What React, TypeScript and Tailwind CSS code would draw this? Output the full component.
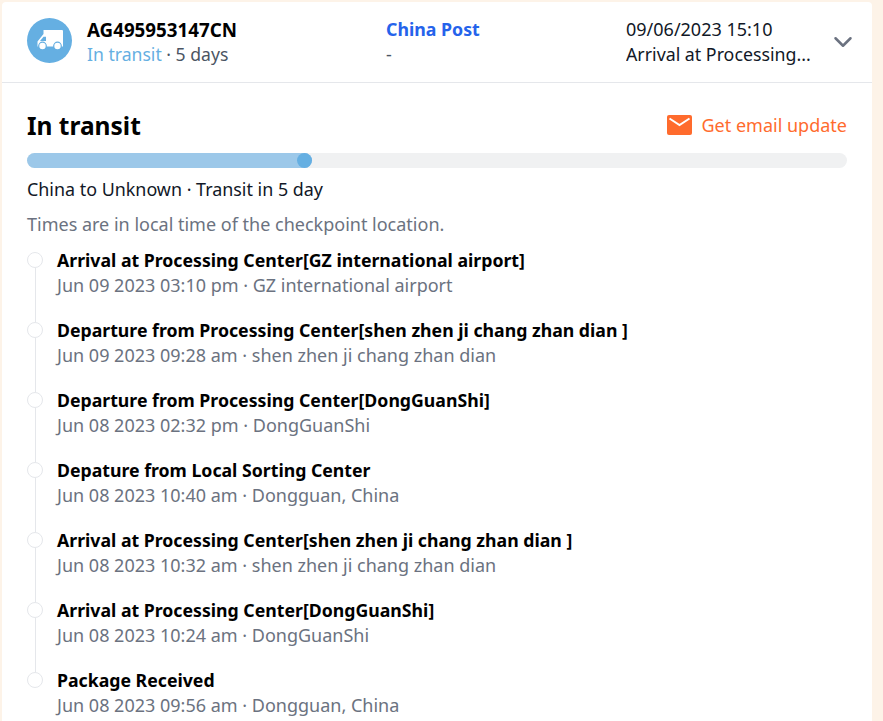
import { ChevronDown } from 'lucide-react';

const events = [
  { title: 'Arrival at Processing Center[GZ international airport]', sub: 'Jun 09 2023 03:10 pm · GZ international airport' },
  { title: 'Departure from Processing Center[shen zhen ji chang zhan dian ]', sub: 'Jun 09 2023 09:28 am · shen zhen ji chang zhan dian' },
  { title: 'Departure from Processing Center[DongGuanShi]', sub: 'Jun 08 2023 02:32 pm · DongGuanShi' },
  { title: 'Depature from Local Sorting Center', sub: 'Jun 08 2023 10:40 am · Dongguan, China' },
  { title: 'Arrival at Processing Center[shen zhen ji chang zhan dian ]', sub: 'Jun 08 2023 10:32 am · shen zhen ji chang zhan dian' },
  { title: 'Arrival at Processing Center[DongGuanShi]', sub: 'Jun 08 2023 10:24 am · DongGuanShi' },
  { title: 'Package Received', sub: 'Jun 08 2023 09:56 am · Dongguan, China' },
];

function TruckIcon() {
  return (
    <svg width="26" height="20" viewBox="0 0 26 20" fill="white">
      <path d="M6.5 0H25a1 1 0 0 1 1 1v15.500H0.500V11.500L6.500 4z" />
      <path d="M3 11 6.500 6.800H9V11z" fill="#65afe2" />
      <circle cx="5.500" cy="16" r="4.400" fill="#65afe2" />
      <circle cx="5.500" cy="16" r="3.200" />
      <circle cx="20.500" cy="16" r="4.400" fill="#65afe2" />
      <circle cx="20.500" cy="16" r="3.200" />
    </svg>
  );
}

function MailIcon() {
  return (
    <svg width="25" height="20" viewBox="0 0 25 20" className="mb-[2px] shrink-0">
      <rect width="25" height="20" rx="2" fill="#ff6b2d" />
      <path d="M2.500 3.500 12.500 10l10-6.500" fill="none" stroke="white" strokeWidth="2" />
    </svg>
  );
}

export default function App() {
  return (
    <div className="h-[721px] overflow-hidden bg-[#fdf3e8] pl-[2px] pr-[11px] pt-[2px] font-['Noto_Sans',sans-serif] text-[18px] leading-[25px]">
      <div className="h-[719px] overflow-hidden rounded-t-[4px] bg-white">
        <div className="flex h-[81px] items-center border-b border-[#e5e7eb] pl-[25px]">
          <div className="mb-[4px] flex h-[45px] w-[45px] shrink-0 items-center justify-center rounded-full bg-[#65afe2]">
            <TruckIcon />
          </div>
          <div className="ml-[15px] w-[299px]">
            <div className="text-[18.75px] font-bold text-black">AG495953147CN</div>
            <div className="text-[17.6px] text-[#4b5563]">
              <span className="text-[#65afe2]">In transit</span> · 5 days
            </div>
          </div>
          <div className="w-[240px]">
            <div className="text-[17.75px] font-bold text-[#2563eb]">China Post</div>
            <div className="text-[#4b5563]">-</div>
          </div>
          <div className="w-[190px] text-[#111827]">
            <div>09/06/2023 15:10</div>
            <div className="truncate text-[17.8px]">Arrival at Processing...</div>
          </div>
          <ChevronDown className="ml-[12px] text-[#6b7280]" size={30} strokeWidth={2} />
        </div>

        <div className="px-[25px]">
          <div className="flex items-center justify-between pt-[27px]">
            <h1 className="text-[24.5px] font-bold leading-[32px] text-black">In transit</h1>
            <div className="flex items-center gap-[10px] text-[#ff6b2d]">
              <MailIcon />
              <span className="-translate-y-px">Get email update</span>
            </div>
          </div>
          <div className="relative mt-[11px] h-[15px] rounded-full bg-[#f0f1f2]">
            <div className="h-full w-[285px] rounded-full bg-[#9cc8e9]" />
            <div className="absolute left-[270px] top-0 h-[15px] w-[15px] rounded-full bg-[#65afe2]" />
          </div>
          <div className="mt-[9px] text-[17.9px] text-[#111827]">China to Unknown · Transit in 5 day</div>
          <div className="mt-[10px] text-[#6b7280]">Times are in local time of the checkpoint location.</div>
          <div className="mt-[11px]">
            {events.map((item, i) => (
              <div key={item.title} className="relative h-[70px] pl-[30px]">
                <div className="absolute left-0 top-[4px] h-[16px] w-[16px] rounded-full border border-[#e5e7eb] bg-white" />
                {i < events.length - 1 && (
                  <div className="absolute left-[7.5px] top-[20px] h-[54px] w-px bg-[#e5e7eb]" />
                )}
                <div className="text-[17.7px] font-bold text-black">{item.title}</div>
                <div className="text-[#6b7280]">{item.sub}</div>
              </div>
            ))}
          </div>
        </div>
      </div>
    </div>
  );
}
